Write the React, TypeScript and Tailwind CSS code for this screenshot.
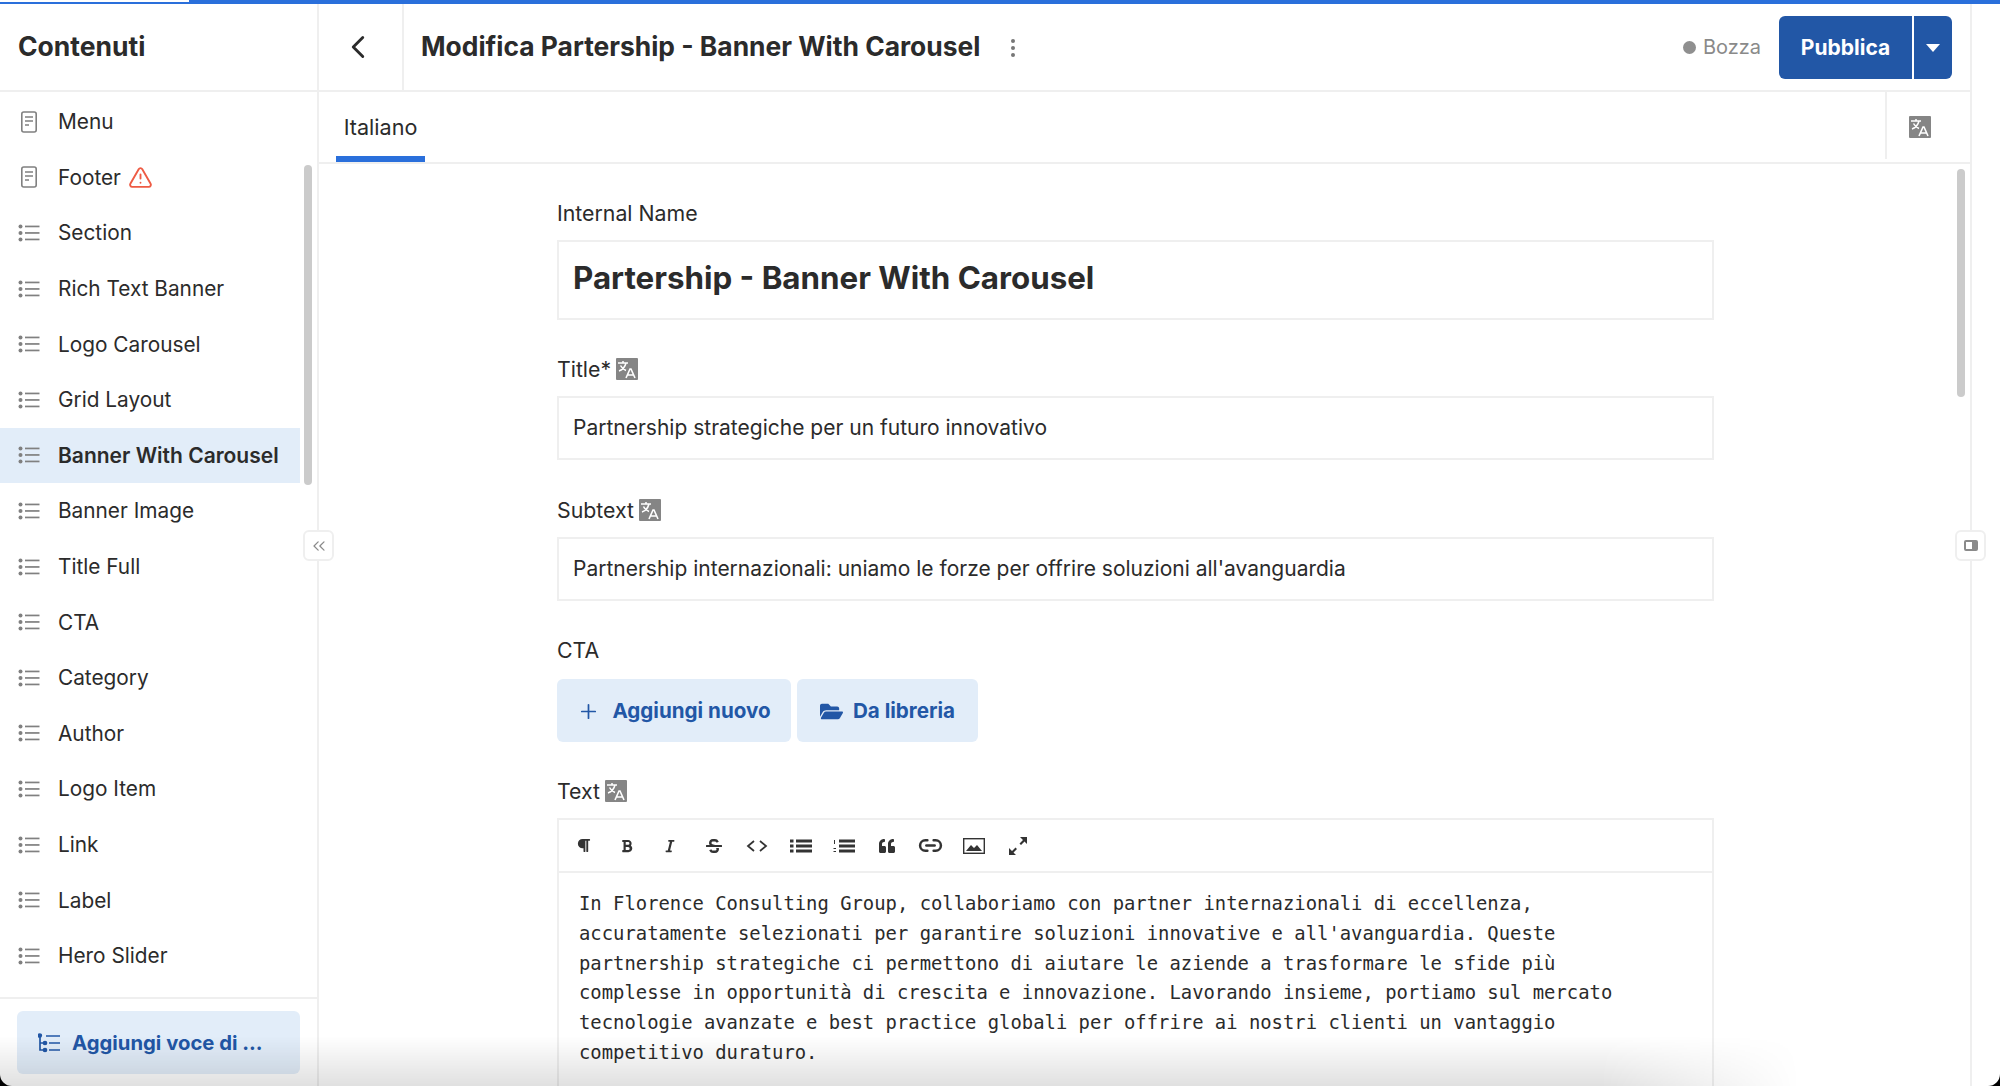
import * as React from "react";
import { ChevronLeft, ChevronsLeft, Plus, TriangleAlert, Link2 } from "lucide-react";
import { FaBold, FaFolderOpen, FaItalic, FaParagraph, FaQuoteLeft, FaStrikethrough } from "react-icons/fa";

const ListIcon = () => (
  <svg width="22" height="18" viewBox="0 0 22 18" className="text-[#808080]" fill="currentColor">
    <circle cx="2.5" cy="2.5" r="2" />
    <circle cx="2.5" cy="9" r="2" />
    <circle cx="2.5" cy="15.5" r="2" />
    <rect x="7" y="1.6" width="14.5" height="1.7" />
    <rect x="7" y="8.1" width="14.5" height="1.7" />
    <rect x="7" y="14.6" width="14.5" height="1.7" />
  </svg>
);

const DocIcon = () => (
  <svg width="22" height="22" viewBox="0 0 22 22" fill="none" stroke="#808080" strokeWidth="1.6">
    <rect x="3.800" y="1" width="14.4" height="20" rx="2" />
    <path d="M7 6h8M7 10h8M7 14h4" />
  </svg>
);

const TranslateIcon = () => (
  <svg width="22" height="22" viewBox="0 0 22 22">
    <rect width="22" height="22" rx="1" fill="#858585" />
    <path d="M2 5h10M7 3v2M10 5c-1 4-4 7-7 8M4.500 7.500c1 2 3 4 5.500 5" fill="none" stroke="#fff" strokeWidth="1.5" />
    <path d="M10 20l4-9h1l4 9M11.500 17h6" fill="none" stroke="#fff" strokeWidth="1.600" />
  </svg>
);

const TreeIcon = () => (
  <svg width="22" height="20" viewBox="0 0 22 20" fill="none" stroke="#2257a6" strokeWidth="1.7">
    <circle cx="1.800" cy="2.500" r="1.500" fill="#2257a6" />
    <path d="M2 3v14h4M2 10h4" />
    <circle cx="7" cy="10" r="1.500" fill="#2257a6" />
    <circle cx="7" cy="17" r="1.500" fill="#2257a6" />
    <path d="M8 3h14M11 10h11M11 17h11" />
  </svg>
);

const CodeIcon = () => (
  <svg width="22" height="14" viewBox="0 0 22 14" fill="none" stroke="#333" strokeWidth="1.8">
    <path d="M8 2L2 7l6 5M14 2l6 5-6 5" />
  </svg>
);

const BulletsIcon = () => (
  <svg width="22" height="14" viewBox="0 0 22 14" fill="#333">
    <rect x="0" y="0.500" width="3.500" height="3" />
    <rect x="0" y="5.500" width="3.500" height="3" />
    <rect x="0" y="10.500" width="3.500" height="3" />
    <rect x="6" y="0.500" width="16" height="3" />
    <rect x="6" y="5.500" width="16" height="3" />
    <rect x="6" y="10.500" width="16" height="3" />
  </svg>
);

const NumbersIcon = () => (
  <svg width="22" height="14" viewBox="0 0 22 14" fill="#333">
    <rect x="6" y="0.500" width="16" height="3" />
    <rect x="6" y="5.500" width="16" height="3" />
    <rect x="6" y="10.500" width="16" height="3" />
    <rect x="1" y="1" width="1" height="4" />
    <rect x="0.500" y="9" width="2.500" height="1" />
    <rect x="0.500" y="12" width="2.500" height="1" />
  </svg>
);

const ImageIcon = () => (
  <svg width="22" height="16" viewBox="0 0 22 16">
    <rect x="0.700" y="0.700" width="20.600" height="14.600" fill="none" stroke="#333" strokeWidth="1.400" />
    <path d="M3 13l5-6 3 3 3-3 5 6z" fill="#333" />
  </svg>
);

const ExpandIcon = () => (
  <svg width="20" height="20" viewBox="0 0 20 20" fill="#333">
    <path d="M12 1h7v7l-2.500-2.500-3.500 3.500-1.500-1.500 3.500-3.500z" />
    <path d="M1 12v7h7l-2.500-2.500 3.500-3.500-1.500-1.500-3.500 3.500z" />
  </svg>
);

const items = [
  "Menu",
  "Footer",
  "Section",
  "Rich Text Banner",
  "Logo Carousel",
  "Grid Layout",
  "Banner With Carousel",
  "Banner Image",
  "Title Full",
  "CTA",
  "Category",
  "Author",
  "Logo Item",
  "Link",
  "Label",
  "Hero Slider",
];

const textLines = [
  "In Florence Consulting Group, collaboriamo con partner internazionali di eccellenza,",
  "accuratamente selezionati per garantire soluzioni innovative e all'avanguardia. Queste",
  "partnership strategiche ci permettono di aiutare le aziende a trasformare le sfide più",
  "complesse in opportunità di crescita e innovazione. Lavorando insieme, portiamo sul mercato",
  "tecnologie avanzate e best practice globali per offrire ai nostri clienti un vantaggio",
  "competitivo duraturo.",
];

const toolbar = [
  <FaParagraph size={15} />,
  <FaBold size={14} />,
  <FaItalic size={14} />,
  <FaStrikethrough size={16} />,
  <CodeIcon />,
  <BulletsIcon />,
  <NumbersIcon />,
  <FaQuoteLeft size={16} />,
  <Link2 size={25} strokeWidth={2.4} />,
  <ImageIcon />,
  <ExpandIcon />,
];

const Sidebar = () => (
  <aside className="flex w-[319px] shrink-0 flex-col border-r-2 border-[#efefef]">
    <div className="flex h-[88px] shrink-0 items-center border-b-2 border-[#efefef] pb-[1px] pl-[18px] text-[26.5px] font-bold text-[#2b2b2b]">
      Contenuti
    </div>
    <nav className="flex-1 pt-[2px]">
      {items.map((item, i) => (
        <div
          key={item}
          className={
            item === "Banner With Carousel"
              ? "flex h-[55.6px] w-[300px] items-center gap-[18px] bg-[#e2edf9] pl-[18px] text-[21px] font-semibold text-[#2b2b2b]"
              : "flex h-[55.6px] w-[300px] items-center gap-[18px] pl-[18px] text-[20.8px] text-[#2b2b2b]"
          }
        >
          <span className="flex w-[22px] justify-center">{i < 2 ? <DocIcon /> : <ListIcon />}</span>
          {item}
          {item === "Footer" && <TriangleAlert size={25} strokeWidth={1.8} className="-ml-[11px] text-[#ee5b44]" />}
        </div>
      ))}
    </nav>
    <div className="shrink-0 border-t-2 border-[#efefef] px-[17px] py-[12px]">
      <button className="flex h-[63px] w-full items-center gap-[12px] rounded-md bg-[#e2edf9] pl-[21px] pt-[1px] text-[20.3px] font-bold text-[#2257a6]">
        <TreeIcon />
        Aggiungi voce di ...
      </button>
    </div>
  </aside>
);

const Field = ({ label, value }: { label: string; value: string }) => (
  <div className="mb-[37px]">
    <div className="mb-[14px] flex h-[26px] items-center gap-[5px] text-[21.3px] text-[#2b2b2b]">
      <span className="pt-[2px]">{label}</span>
      <TranslateIcon />
    </div>
    <div className="flex h-[64px] items-center border-2 border-[#efefef] pb-[1px] pl-[14px] text-[21px] text-[#2b2b2b]">{value}</div>
  </div>
);

const App = () => (
  <div className="h-screen w-full bg-black">
    <div className="relative flex h-full w-full flex-col overflow-hidden rounded-b-[12px] bg-white font-['Inter',sans-serif]">
      <div className="flex h-[4px] shrink-0 bg-[#2a6fdb]">
        <div className="h-[2px] w-[189px] bg-white" />
      </div>
      <div className="flex min-h-0 flex-1">
        <Sidebar />
        <main className="flex min-w-0 flex-1 flex-col">
          <header className="flex h-[88px] shrink-0 items-center border-b-2 border-[#efefef]">
            <div className="flex h-full w-[85px] items-center justify-center border-r-2 border-[#efefef] pr-[6px]">
              <ChevronLeft size={38} strokeWidth={1.8} className="text-[#2b2b2b]" />
            </div>
            <h1 className="ml-[17px] text-[26.4px] font-bold text-[#2b2b2b]">Modifica Partership - Banner With Carousel</h1>
            <svg width="6" height="20" viewBox="0 0 6 20" fill="#777" className="ml-[30px] mt-[2px]">
              <circle cx="3" cy="3" r="2" />
              <circle cx="3" cy="10" r="2" />
              <circle cx="3" cy="17" r="2" />
            </svg>
            <div className="ml-auto flex items-center gap-[7px] text-[20px] text-[#8a8a8a]">
              <span className="size-[13px] rounded-full bg-[#8f8f8f]" />
              Bozza
            </div>
            <div className="ml-[18px] mr-[18px] flex h-[63px] overflow-hidden rounded-md bg-[#2257a6] text-white">
              <div className="flex w-[133px] items-center justify-center pt-[2px] text-[21px] font-bold">Pubblica</div>
              <div className="flex w-[40px] items-center justify-center border-l-2 border-white pt-[2px]">
                <span className="size-0 border-x-[7px] border-t-[8px] border-x-transparent border-t-white" />
              </div>
            </div>
          </header>
          <div className="flex h-[72px] shrink-0 items-stretch border-b-2 border-[#efefef] pl-[17px]">
            <div className="flex w-[89px] items-center justify-center border-b-[6px] border-[#2a6fdb] pt-[7px] text-[21.6px] text-[#2b2b2b]">
              Italiano
            </div>
            <div className="mb-[3px] ml-auto flex w-[85px] items-center justify-center border-l-2 border-[#efefef] pr-[18px] pt-[3px]">
              <TranslateIcon />
            </div>
          </div>
          <div className="relative min-h-0 flex-1 overflow-hidden">
            <div className="ml-[238px] w-[1157px] pt-[36px]">
              <div className="mb-[36px]">
                <div className="mb-[14px] flex h-[26px] items-center pt-[2px] text-[21.3px] text-[#2b2b2b]">Internal Name</div>
                <div className="flex h-[80px] items-center border-2 border-[#efefef] pb-[3px] pl-[14px] text-[31.3px] font-bold text-[#2b2b2b]">
                  Partership - Banner With Carousel
                </div>
              </div>
              <Field label="Title*" value="Partnership strategiche per un futuro innovativo" />
              <Field label="Subtext" value="Partnership internazionali: uniamo le forze per offrire soluzioni all'avanguardia" />
              <div className="mb-[14px] flex h-[26px] items-center text-[21.3px] text-[#2b2b2b]">CTA</div>
              <div className="mb-[36px] flex gap-[6px] pt-[1px]">
                <button className="flex h-[63px] w-[234px] items-center justify-center gap-[12px] rounded-md bg-[#e2edf9] pt-[1px] text-[20.6px] font-bold text-[#2257a6]">
                  <Plus size={23} strokeWidth={1.8} />
                  Aggiungi nuovo
                </button>
                <button className="flex h-[63px] w-[181px] items-center justify-center gap-[10px] rounded-md bg-[#e2edf9] pt-[1px] text-[20.6px] font-bold text-[#2257a6]">
                  <FaFolderOpen size={23} />
                  Da libreria
                </button>
              </div>
              <div className="mb-[14px] flex h-[26px] items-center gap-[5px] text-[21.3px] text-[#2b2b2b]">
                <span className="pt-[2px]">Text</span>
                <TranslateIcon />
              </div>
              <div className="border-2 border-[#efefef]">
                <div className="flex h-[53px] items-center border-b-2 border-[#efefef] pl-[3px] text-[#333]">
                  {toolbar.map((icon, i) => (
                    <span key={i} className="flex w-[43.4px] justify-center">
                      {icon}
                    </span>
                  ))}
                </div>
                <div className="pb-[20px] pl-[20px] pt-[16px] font-['DejaVu_Sans_Mono',monospace] text-[18.88px] leading-[29.8px] text-[#2b2b2b]">
                  {textLines.map((line) => (
                    <div key={line} className="whitespace-pre">
                      {line}
                    </div>
                  ))}
                </div>
              </div>
            </div>
            <div className="absolute right-[5px] top-[5px] h-[228px] w-[8px] rounded-full bg-[#cbcbcb]" />
          </div>
        </main>
        <div className="w-[30px] shrink-0 border-l-2 border-[#efefef]" />
      </div>
      <div className="absolute left-[304px] top-[165px] h-[320px] w-[8px] rounded-full bg-[#cbcbcb]" />
      <div className="absolute left-[303px] top-[530px] flex size-[31px] items-center justify-center rounded-md border-2 border-[#efefef] bg-white">
        <ChevronsLeft size={20} strokeWidth={1.5} className="text-[#8a8a8a]" />
      </div>
      <div className="absolute left-[1955px] top-[530px] flex size-[31px] items-center justify-center rounded-md border-2 border-[#efefef] bg-white">
        <span className="h-[11px] w-[14px] rounded-[2px] border-2 border-[#8a8a8a] pl-[6px]">
          <span className="block h-full w-full bg-[#8a8a8a]" />
        </span>
      </div>
      <div className="pointer-events-none absolute inset-x-0 bottom-0 h-[50px] bg-gradient-to-b from-transparent to-black/12 [mask-image:linear-gradient(to_right,black_80%,transparent_90%)]" />
    </div>
  </div>
);

export default App;
